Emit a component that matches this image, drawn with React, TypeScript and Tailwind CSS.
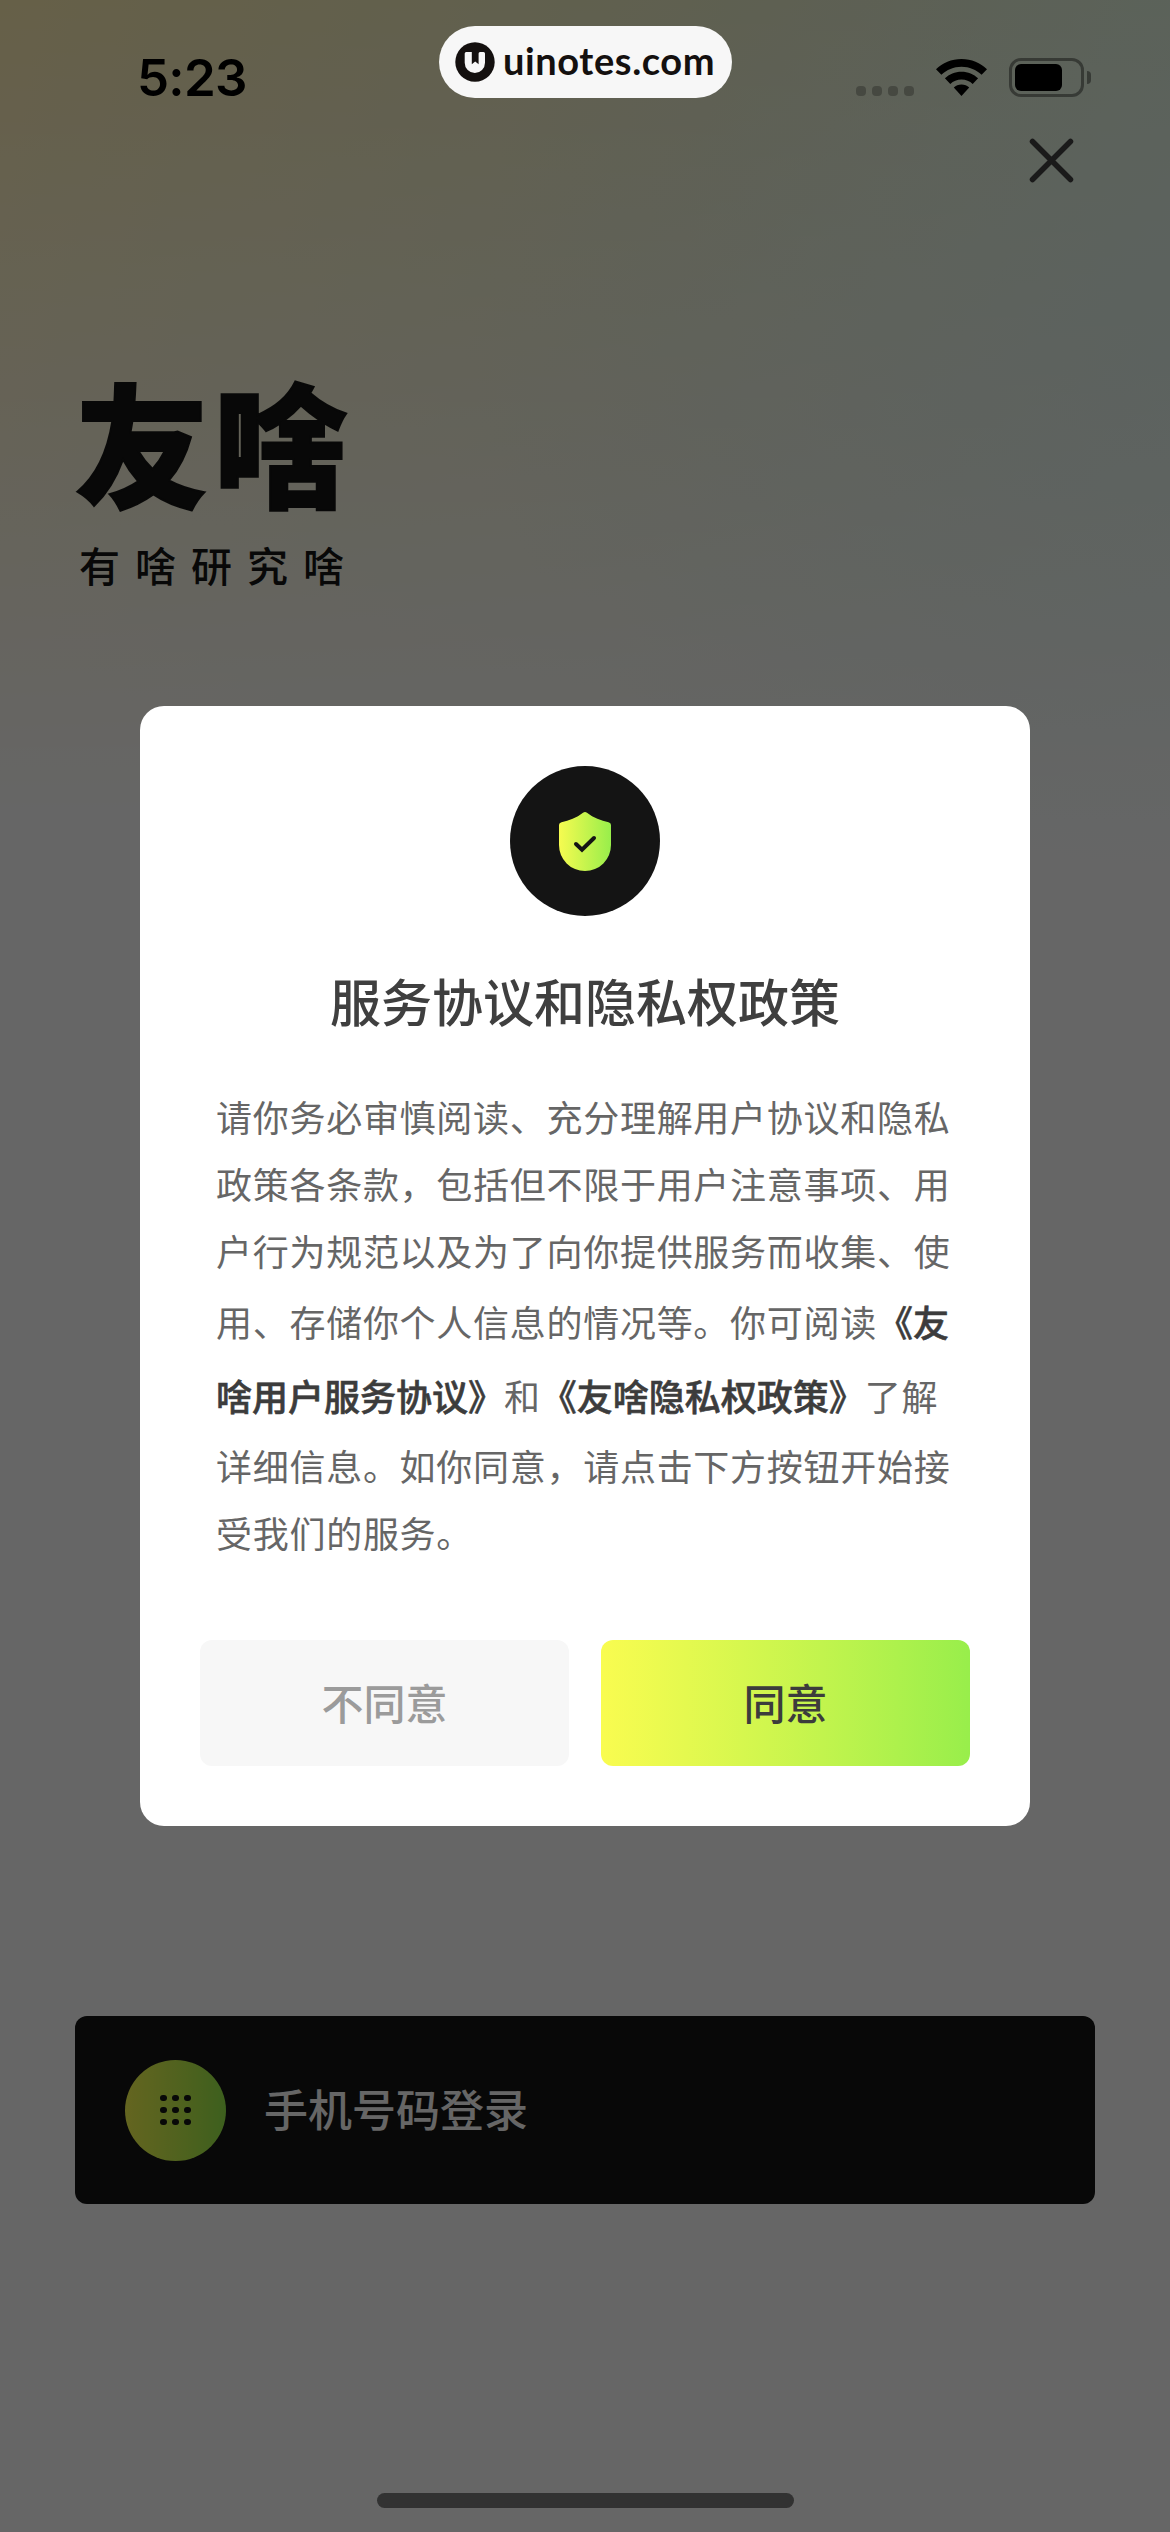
import React from "react";

const actions = [
  { label: "不同意", style: "bg-[#f7f7f7] text-[#9b9b9b]" },
  { label: "同意", style: "bg-gradient-to-r from-[#f9fc50] to-[#98ee4b] text-[#3c3c3c]" },
];

function StatusBar() {
  return (
    <div className="flex h-[130px] items-start pl-[137px] pr-[79px]">
      <span className="mt-[47px] font-['Inter'] text-[51px] leading-[62px] font-semibold tracking-[-0.7px] text-black">5:23</span>
      <div className="mt-[58px] ml-auto flex h-[39px] items-start">
        <div className="mt-7 flex gap-1.5">
          {[0, 1, 2, 3].map((i) => (
            <span key={i} className="size-2.5 rounded-[4px] bg-black/25" />
          ))}
        </div>
        <svg className="mt-px ml-[22px]" width="51" height="38" viewBox="0 0 51 38">
          <path d="M25.5 0C35.5 0 44.500 3.800 51 10.200L45.600 15.800C40.300 10.700 33.300 7.700 25.500 7.700S10.700 10.700 5.400 15.800L0 10.200C6.500 3.800 15.500 0 25.500 0Z" />
          <path d="M25.500 12.700C32 12.700 37.800 15.200 42.100 19.300L36.700 24.900C33.800 22.100 29.900 20.400 25.500 20.400S17.200 22.100 14.300 24.900L8.900 19.300C13.200 15.200 19 12.700 25.500 12.700Z" />
          <path d="M25.500 25.500C28.500 25.500 31.200 26.600 33.200 28.500L25.500 37L17.800 28.500C19.800 26.600 22.500 25.500 25.500 25.500Z" />
        </svg>
        <div className="ml-[22px] flex h-[39px] w-[75px] items-center rounded-[12px] border-3 border-black/40 pl-[3px]">
          <div className="h-[27px] w-[47px] rounded-[6px] bg-black" />
        </div>
        <div className="mt-[13px] ml-[3px] h-[13px] w-1 rounded-r-full bg-black/40" />
      </div>
    </div>
  );
}

function Watermark() {
  return (
    <div className="absolute top-[26px] left-[439px] flex h-[72px] w-[293px] items-center rounded-full bg-[#f7f7f7] pl-4">
      <svg width="40" height="40" viewBox="0 0 40 40">
        <circle cx="20" cy="20" r="19.700" fill="#14100f" />
        <path d="M9.700 11.500Q9.700 10 11.200 10H16.800V22.200L20.200 19.400L23.600 22.200V11.500Q23.600 10 25 10H28.500Q30 10 30 11.500V20.800A10.150 10.300 0 0 1 9.700 20.800Z" fill="#f7f7f7" />
      </svg>
      <span className="mb-1 ml-2 font-['Lato'] text-[38px] leading-[46px] font-bold tracking-[0.6px] text-[#14100f]">uinotes.com</span>
    </div>
  );
}

function DocLink({ children }: { children: React.ReactNode }) {
  return (
    <b className="font-medium tracking-normal text-[#3c3c3c] [-webkit-text-stroke:0.6px_#3c3c3c]">{children}</b>
  );
}

function AgreementModal() {
  return (
    <div className="absolute top-[706px] left-[140px] flex h-[1120px] w-[890px] flex-col items-center rounded-3xl bg-white px-[60px] pt-[60px]">
      <div className="flex size-[150px] items-center justify-center rounded-full bg-[#141414] pt-0.5">
        <svg width="54" height="62" viewBox="0 0 54 62">
          <defs>
            <linearGradient id="shield" x1="0" x2="1" y1="0" y2="0">
              <stop offset="0" stopColor="#f6fb50" />
              <stop offset="1" stopColor="#98ee4b" />
            </linearGradient>
          </defs>
          <path d="M25 1.800Q27 .2 29 1.800C35.500 6.900 43 9.800 50.500 11.200Q53 11.700 53 14V34A26 26 0 0 1 1 34V14Q1 11.700 3.500 11.200C11 9.800 18.500 6.900 25 1.800Z" fill="url(#shield)" />
          <path d="M18 33L24 38.700L36 27" fill="none" stroke="#141414" strokeWidth="4" strokeLinecap="round" strokeLinejoin="miter" />
        </svg>
      </div>
      <h2 className="mt-[47px] text-[51px] leading-[74px] font-medium text-[#3f3f3f]">服务协议和隐私权政策</h2>
      <div className="mt-[46px] w-[738px] text-[36px] leading-[67px] tracking-[0.72px] whitespace-nowrap text-[#666]">
        <p>请你务必审慎阅读、充分理解用户协议和隐私</p>
        <p>政策各条款，包括但不限于用户注意事项、用</p>
        <p>户行为规范以及为了向你提供服务而收集、使</p>
        <p className="leading-[75px]">
          用、存储你个人信息的情况等。你可阅读<DocLink>《友</DocLink>
        </p>
        <p className="leading-[73px]">
          <DocLink>啥用户服务协议》</DocLink>和<DocLink>《友啥隐私权政策》</DocLink>了解
        </p>
        <p>详细信息。如你同意，请点击下方按钮开始接</p>
        <p>受我们的服务。</p>
      </div>
      <div className="mt-auto mb-[60px] flex w-full gap-8">
        {actions.map((a) => (
          <button key={a.label} className={`h-[126px] flex-1 rounded-xl pb-[3px] text-[42px] font-medium ${a.style}`}>
            {a.label}
          </button>
        ))}
      </div>
    </div>
  );
}

export default function App() {
  return (
    <div className="relative h-[2532px] w-[1170px] overflow-hidden bg-white font-['Noto_Sans_CJK_SC',sans-serif]">
      {/* Login page */}
      <div className="flex h-full flex-col bg-[radial-gradient(700px_560px_at_100%_340px,#dcf0ee77,transparent),linear-gradient(to_bottom,transparent_0,#ffffff80_430px,#fff_820px),linear-gradient(100deg,#ffefb4_0%,#edefc8_45%,#e1faea_90%,#e1f8f2_100%)]">
        <StatusBar />
        <svg className="mt-[5px] mr-[93px] self-end" width="51" height="51" viewBox="0 0 51 51" fill="none" stroke="#414141" strokeWidth="5.500" strokeLinecap="round">
          <path d="M6.500 6.500L44.500 44.500M44.500 6.500L6.500 44.500" />
        </svg>
        <h1 className="mt-[169px] ml-[75px] text-[134px] leading-[170px] font-black tracking-[5px] text-[#141414] [-webkit-text-stroke:2px_#141414]">友啥</h1>
        <p className="mt-[9px] ml-[79px] text-[41px] leading-[60px] font-medium tracking-[15px] text-[#141414]">有啥研究啥</p>
        <button className="mx-[75px] mt-auto mb-[289px] flex h-[188px] items-center rounded-xl bg-[#141414] pl-[50px]">
          <span className="flex size-[101px] items-center justify-center rounded-full bg-gradient-to-r from-[#f9fc50] to-[#98ee4b]">
            <span className="grid grid-cols-3 gap-[5.700px]">
              {Array.from({ length: 9 }).map((_, i) => (
                <span key={i} className="size-[6.500px] rounded-full bg-[#141414]" />
              ))}
            </span>
          </span>
          <span className="mb-[5px] ml-[38px] text-[44px] font-medium text-white">手机号码登录</span>
        </button>
        <div className="mb-6 h-[15px] w-[417px] shrink-0 self-center rounded-full bg-[#7d7d7d]" />
      </div>
      {/* Scrim */}
      <div className="absolute inset-0 bg-black/60" />
      <Watermark />
      <AgreementModal />
    </div>
  );
}
